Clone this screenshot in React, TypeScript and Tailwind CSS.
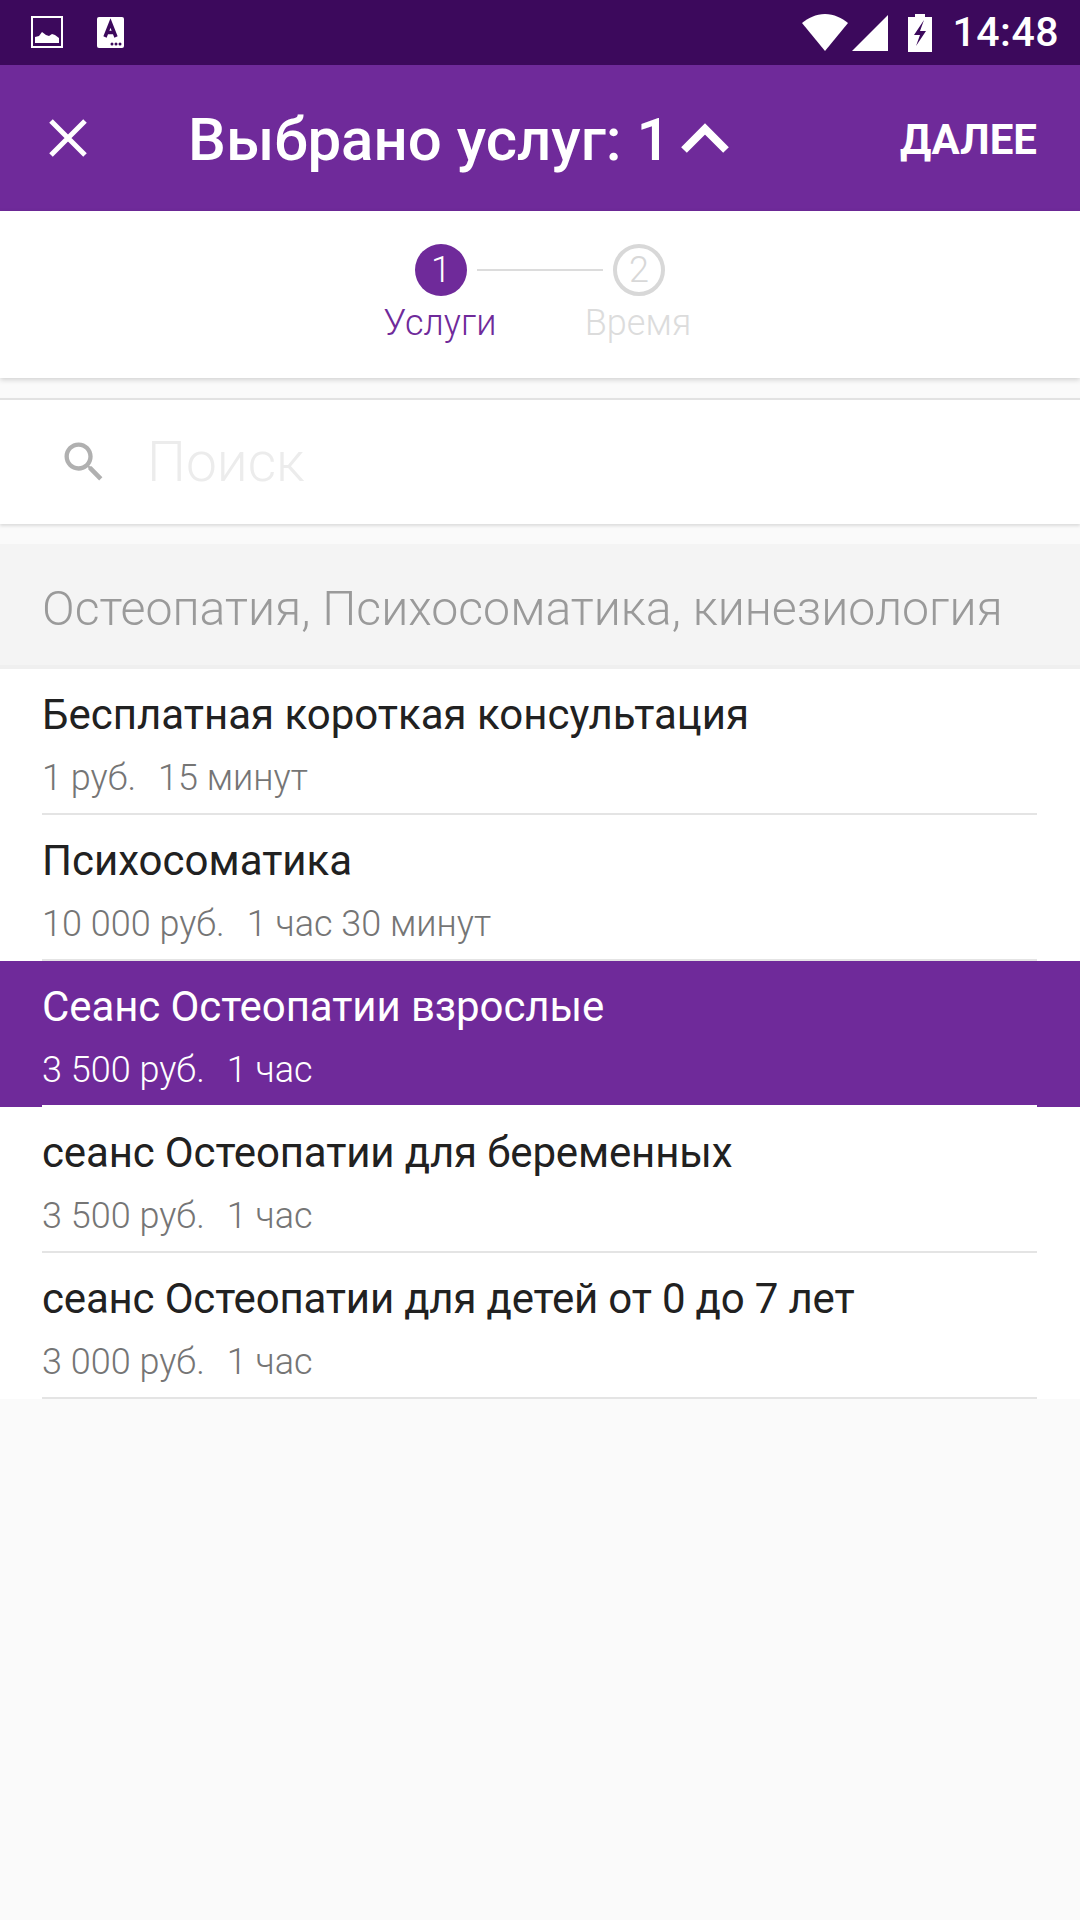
const services = [
  { name: "Бесплатная короткая консультация", price: "1 руб.", time: "15 минут", nameClass: "" },
  { name: "Психосоматика", price: "10 000 руб.", time: "1 час 30 минут", nameClass: "" },
  { name: "Сеанс Остеопатии взрослые", price: "3 500 руб.", time: "1 час", nameClass: "tracking-[-0.1px]", selected: true },
  { name: "сеанс Остеопатии для беременных", price: "3 500 руб.", time: "1 час", nameClass: "tracking-[-0.15px]" },
  { name: "сеанс Остеопатии для детей от 0 до 7 лет", price: "3 000 руб.", time: "1 час", nameClass: "tracking-[-0.18px]" },
]

// Status bar
function StatusBar() {
  return (
    <div className="flex h-[65px] items-center bg-[#3c095c] pl-[31px] pr-[21px] text-white">
      <svg width="32" height="32" viewBox="0 0 32 32" className="mt-[-1px]">
        <rect x="1" y="1" width="30" height="30" fill="none" stroke="#fff" strokeWidth="2" />
        <path d="M4 27v-6l4-1 3-4 4 3 3 1 3-2 3 1 4 3v5z" fill="#fff" />
      </svg>
      <svg width="27" height="31" viewBox="0 0 27 31" className="ml-[34px] mt-[-1px]">
        <rect x="0" y="0" width="27" height="31" rx="2" fill="#fff" />
        <path d="M8 20 13.500 6 19 20M10 15.500h7" fill="none" stroke="#3c095c" strokeWidth="3.500" />
        <circle cx="15" cy="27" r="1.500" fill="#3c095c" />
        <circle cx="19" cy="27" r="1.500" fill="#3c095c" />
        <circle cx="23" cy="27" r="1.500" fill="#3c095c" />
      </svg>
      <div className="flex-1" />
      <svg width="46" height="38" viewBox="0 0 46 38" className="mt-[1px]">
        <path d="M0 9C6 4 14 0 23 0s17 4 23 9L23 37z" fill="#fff" />
      </svg>
      <svg width="36" height="37" viewBox="0 0 36 37" className="ml-[4px] mt-[1px]">
        <path d="M0 36 36 0v36z" fill="#fff" />
      </svg>
      <svg width="24" height="38" viewBox="0 0 24 38" className="ml-[20px] mt-[1px]">
        <path d="M7 0h10v3h7v35H0V3h7z" fill="#fff" />
        <path d="M16 6 6 21h6l-4 11 10-15h-6z" fill="#3c095c" />
      </svg>
      <span className="ml-[20px] text-[41px] font-medium leading-none tracking-[0.5px]">14:48</span>
    </div>
  )
}

// Toolbar with title and next action
function Toolbar() {
  return (
    <div className="flex h-[146px] items-center bg-[#6f2a9a] text-white">
      <svg width="38" height="38" viewBox="0 0 38 38" className="ml-[49px] shrink-0">
        <path d="M2 2l34 34M36 2 2 36" fill="none" stroke="#fff" strokeWidth="5" />
      </svg>
      <span className="ml-[101px] mt-[4px] text-[60px] font-medium leading-none">Выбрано услуг: 1</span>
      <svg width="48" height="30" viewBox="0 0 48 30" className="ml-[10px] shrink-0">
        <path d="M3 27 24 6l21 21" fill="none" stroke="#fff" strokeWidth="8" />
      </svg>
      <div className="flex-1" />
      <span className="mr-[43px] mt-[3px] text-[42px] font-bold leading-none">ДАЛЕЕ</span>
    </div>
  )
}

// Two step indicator
function Stepper() {
  return (
    <div className="flex h-[167px] justify-center bg-white pt-[33px] shadow-[0_2px_5px_rgba(0,0,0,0.16)]">
      <div className="flex w-[52px] flex-col items-center">
        <div className="flex h-[52px] w-[52px] shrink-0 items-center justify-center rounded-full bg-[#6f2a9a] text-[36px] font-light leading-none text-white">
          1
        </div>
        <span className="-ml-[2px] mt-[4px] whitespace-nowrap text-[36px] font-light leading-[46px] text-[#6f2a9a]">Услуги</span>
      </div>
      <div className="mx-[10px] mt-[25px] h-[2px] w-[126px] bg-[#dcdcdc]" />
      <div className="flex w-[52px] flex-col items-center">
        <div className="flex h-[52px] w-[52px] shrink-0 items-center justify-center rounded-full border-[4px] border-[#d8d8d8] text-[36px] font-light leading-none text-[#d8d8d8]">
          2
        </div>
        <span className="-ml-[2px] mt-[4px] whitespace-nowrap text-[36px] font-light leading-[46px] text-[#dcdcdc]">Время</span>
      </div>
    </div>
  )
}

function SearchBar() {
  return (
    <div className="mt-[20px] flex h-[126px] items-center border-t-2 border-[#e2e2e2] bg-white shadow-[0_2px_3px_rgba(0,0,0,0.12)]">
      <svg width="52" height="52" viewBox="0 0 24 24" className="ml-[58px] shrink-0" fill="#b0b0b0">
        <path d="M15.5 14h-.79l-.28-.27C15.41 12.59 16 11.11 16 9.500 16 5.910 13.090 3 9.500 3S3 5.910 3 9.500 5.910 16 9.500 16c1.610 0 3.090-.59 4.230-1.570l.27.28v.79l5 4.990L20.490 19l-4.990-5zm-6 0C7.010 14 5 11.990 5 9.500S7.010 5 9.500 5 14 7.010 14 9.500 11.990 14 9.500 14z" />
      </svg>
      <span className="ml-[37px] text-[55px] font-light leading-none text-[#ececec]">Поиск</span>
    </div>
  )
}

function ServiceRow({ name, price, time, selected, nameClass }: { name: string; price: string; time: string; selected?: boolean; nameClass: string }) {
  return (
    <div className={selected ? "bg-[#6f2a9a] pl-[42px]" : "bg-white pl-[42px]"}>
      <div className={`mr-[43px] h-[146px] border-b-2 ${selected ? "border-white" : "border-[#e4e4e4]"}`}>
        <div className={`pt-[21px] text-[42px] leading-[50px] ${nameClass} ${selected ? "text-white" : "text-[#212121]"}`}>{name}</div>
        <div className={`mt-[16px] flex gap-[22px] text-[36px] font-light leading-[44px] ${selected ? "text-white" : "text-[#757575]"}`}>
          <span>{price}</span>
          <span>{time}</span>
        </div>
      </div>
    </div>
  )
}

export default function App() {
  return (
    <div className="flex min-h-[1920px] flex-col bg-[#fafafa] font-['Roboto',sans-serif]">
      <StatusBar />
      <Toolbar />
      <Stepper />
      <SearchBar />

      {/* Category header */}
      <div className="mt-[20px] flex h-[125px] items-center border-b-[4px] border-[#efefef] bg-[#f4f4f4] pl-[42px] pt-[9px] text-[48.2px] font-light leading-none text-[#9a9a9a]">
        Остеопатия, Психосоматика, кинезиология
      </div>

      {services.map((s) => (
        <ServiceRow key={s.name} {...s} />
      ))}
    </div>
  )
}
